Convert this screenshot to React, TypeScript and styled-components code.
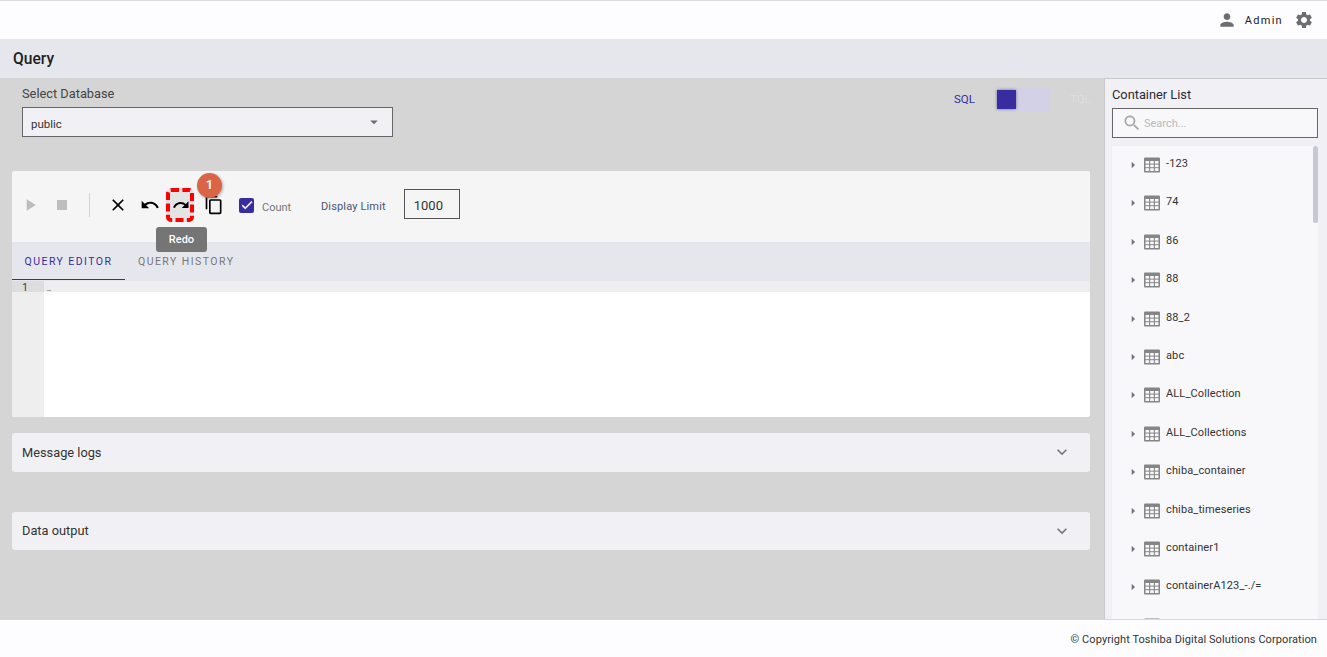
import React from "react";
import styled, { createGlobalStyle } from "styled-components";

const GlobalStyle = createGlobalStyle`
  html, body, #root {
    margin: 0;
    padding: 0;
    height: 100%;
  }
  body {
    font-family: Roboto, "Liberation Sans", sans-serif;
    overflow: hidden;
  }
`;

const paths = {
  play: "M8 5v14l11-7z",
  stop: "M6 6h12v12H6z",
  close:
    "M19 6.41L17.59 5 12 10.59 6.41 5 5 6.41 10.59 12 5 17.59 6.41 19 12 13.41 17.59 19 19 17.59 13.41 12z",
  undo: "M12.5 8c-2.65 0-5.05.99-6.9 2.6L2 7v9h9l-3.62-3.62c1.39-1.16 3.16-1.88 5.12-1.88 3.54 0 6.55 2.31 7.6 5.5l2.37-.78C21.08 11.03 17.15 8 12.5 8z",
  redo: "M18.4 10.6C16.55 8.99 14.15 8 11.5 8c-4.65 0-8.58 3.03-9.96 7.22L3.9 16c1.05-3.19 4.05-5.5 7.6-5.5 1.95 0 3.73.72 5.12 1.88L13 16h9V7l-3.6 3.6z",
  copy: "M16 1H4c-1.1 0-2 .9-2 2v14h2V3h12V1zm3 4H8c-1.1 0-2 .9-2 2v14c0 1.1.9 2 2 2h11c1.1 0 2-.9 2-2V7c0-1.1-.9-2-2-2zm0 16H8V7h11v14z",
  person:
    "M12 12c2.21 0 4-1.79 4-4s-1.79-4-4-4-4 1.79-4 4 1.79 4 4 4zm0 2c-2.67 0-8 1.34-8 4v2h16v-2c0-2.66-5.33-4-8-4z",
  settings:
    "M19.14 12.94c.04-.3.06-.61.06-.94 0-.32-.02-.64-.07-.94l2.03-1.58c.18-.14.23-.41.12-.61l-1.92-3.32c-.12-.22-.37-.29-.59-.22l-2.39.96c-.5-.38-1.03-.7-1.62-.94l-.36-2.54c-.04-.24-.24-.41-.48-.41h-3.84c-.24 0-.43.17-.47.41l-.36 2.54c-.59.24-1.13.57-1.62.94l-2.39-.96c-.22-.08-.47 0-.59.22L2.74 8.87c-.12.21-.08.47.12.61l2.03 1.58c-.05.3-.09.63-.09.94s.02.64.07.94l-2.03 1.58c-.18.14-.23.41-.12.61l1.92 3.32c.12.22.37.29.59.22l2.39-.96c.5.38 1.03.7 1.62.94l.36 2.54c.05.24.24.41.48.41h3.84c.24 0 .44-.17.47-.41l.36-2.54c.59-.24 1.13-.56 1.62-.94l2.39.96c.22.08.47 0 .59-.22l1.92-3.32c.12-.22.07-.47-.12-.61l-2.01-1.58zM12 15.6c-1.98 0-3.6-1.62-3.6-3.6s1.62-3.6 3.6-3.6 3.6 1.62 3.6 3.6-1.62 3.6-3.6 3.6z",
  search:
    "M15.5 14h-.79l-.28-.27C15.41 12.59 16 11.11 16 9.5 16 5.91 13.09 3 9.5 3S3 5.91 3 9.5 5.91 16 9.5 16c1.61 0 3.09-.59 4.23-1.57l.27.28v.79l5 4.99L20.49 19l-4.99-5zm-6 0C7.01 14 5 11.99 5 9.5S7.01 5 9.5 5 14 7.01 14 9.5 11.99 14 9.5 14z",
  expand: "M16.59 8.59L12 13.17 7.41 8.59 6 10l6 6 6-6z",
  caret: "M10 17l5-5-5-5v10z",
  drop: "M7 10l5 5 5-5z",
  check: "M9 16.2L4.8 12l-1.4 1.4L9 19 21 7l-1.4-1.4z",
};

type IconProps = {
  name: keyof typeof paths;
  size?: number;
  color?: string;
};
const Icon: React.FC<IconProps> = ({ name, size = 24, color = "#000" }) => (
  <svg width={size} height={size} viewBox="0 0 24 24" fill={color}>
    <path d={paths[name]} />
  </svg>
);

const Page = styled.div`
  width: 1327px;
  height: 657px;
  display: flex;
  flex-direction: column;
  overflow: hidden;
`;

const Header = styled.header`
  height: 38px;
  flex: none;
  border-top: 1px solid #dcdcdc;
  background: #fdfdff;
  display: flex;
  align-items: center;
  justify-content: flex-end;
  padding-right: 13px;
`;

const AdminName = styled.span`
  font-size: 11px;
  letter-spacing: 1.3px;
  color: #1b1b2b;
  margin: 0 11px 0 8px;
`;

const TitleBar = styled.div`
  height: 39px;
  flex: none;
  background: #e6e7ec;
  display: flex;
  align-items: center;
  padding-left: 13px;
  font-size: 15.6px;
  font-weight: 500;
  color: #1e1e22;
`;

const Body = styled.div`
  flex: 1;
  min-height: 0;
  display: flex;
  background: #d5d5d5;
`;

const Main = styled.main`
  flex: 1;
  min-width: 0;
  padding: 0 14px 0 12px;
  position: relative;
`;

const TopRow = styled.div`
  display: flex;
  justify-content: space-between;
  height: 93px;
  padding-left: 10px;
`;

const DbLabel = styled.div`
  font-size: 12.8px;
  line-height: 15px;
  color: #444;
  margin: 8px 0 6px;
`;

const DbSelect = styled.div`
  width: 371px;
  height: 30px;
  box-sizing: border-box;
  border: 1px solid #666;
  background: #f1f1f5;
  display: flex;
  align-items: center;
  justify-content: space-between;
  padding: 0 9px 0 8px;
  font-size: 11.5px;
  color: #333;
`;

const DbValue = styled.span`
  margin-top: 4px;
`;

const ModeSwitch = styled.div`
  display: flex;
  align-items: center;
  height: 24px;
  margin-top: 9px;
`;

const ModeLabel = styled.span<{ $active?: boolean }>`
  font-size: 11.5px;
  width: 20px;
  color: ${(p) => (p.$active ? "#372ca0" : "#dedede")};
`;

const SwitchTrack = styled.div`
  width: 55px;
  height: 24px;
  margin: 0 20px 0 21px;
  background: #d2d1e6;
  display: flex;
  align-items: center;
  padding-left: 2px;
  box-sizing: border-box;
`;

const SwitchThumb = styled.div`
  width: 19px;
  height: 19px;
  background: #372ca0;
  box-shadow: 0 0 3px rgba(0, 0, 0, 0.45);
`;

const EditorCard = styled.section`
  height: 246px;
  border-radius: 3px;
  display: flex;
  flex-direction: column;
  background: #fff;
`;

const Toolbar = styled.div`
  height: 71px;
  flex: none;
  border-radius: 3px 3px 0 0;
  background: #f5f5f5;
  display: flex;
  align-items: center;
  padding: 0 0 4px 2px;
  box-sizing: border-box;
`;

const ToolButton = styled.div<{ $width?: number }>`
  width: ${(p) => p.$width ?? 32}px;
  height: 34px;
  display: flex;
  align-items: center;
  justify-content: center;
  flex: none;
`;

const RedoButton = styled(ToolButton)`
  position: relative;
  width: 28px;
  margin: 0 3px 0 0;
  padding-left: 2px;
  box-sizing: border-box;
  background: #e4e4e4;
  border: 4px dashed #f00;
  border-radius: 5px;
  svg {
    flex: none;
  }
`;

const Badge = styled.div`
  position: absolute;
  left: 27px;
  top: -19px;
  width: 25px;
  height: 25px;
  border-radius: 50%;
  background: #da6445;
  color: #fff;
  font-size: 12px;
  font-weight: 700;
  display: flex;
  align-items: center;
  justify-content: center;
  box-shadow: 1px 1px 3px rgba(0, 0, 0, 0.3);
  z-index: 2;
`;

const Tooltip = styled.div`
  position: absolute;
  left: -14px;
  top: 35px;
  width: 51px;
  height: 25px;
  border-radius: 3px;
  background: #757575;
  color: #fff;
  font-size: 11px;
  font-weight: 500;
  display: flex;
  align-items: center;
  justify-content: center;
  z-index: 2;
`;

const Divider = styled.div`
  width: 1px;
  height: 24px;
  background: #d4d4d4;
  margin: 0 12px 0 11px;
`;

const CheckBox = styled.div`
  width: 15px;
  height: 15px;
  margin: 1px 8px 0 9px;
  border-radius: 2px;
  background: #372ca0;
  display: flex;
  align-items: center;
  justify-content: center;
  path {
    stroke: #fff;
    stroke-width: 1;
  }
`;

const CountLabel = styled.span`
  font-size: 11px;
  color: #777;
  margin-top: 5px;
  width: 59px;
`;

const LimitLabel = styled.span`
  font-size: 11px;
  letter-spacing: 0.15px;
  color: #4a5670;
  margin: 3px 18px 0 0;
`;

const LimitInput = styled.div`
  width: 56px;
  height: 30px;
  margin-bottom: 2px;
  box-sizing: border-box;
  border: 1px solid #555;
  display: flex;
  align-items: center;
  padding: 3px 0 0 9px;
  font-size: 13px;
  color: #333;
`;

const Tabs = styled.div`
  height: 39px;
  flex: none;
  background: #e6e7ec;
  display: flex;
  align-items: flex-start;
`;

const Tab = styled.div<{ $active?: boolean }>`
  width: ${(p) => (p.$active ? 113 : 122)}px;
  height: 38px;
  box-sizing: border-box;
  text-align: ${(p) => (p.$active ? "center" : "left")};
  padding-left: ${(p) => (p.$active ? 0 : 13)}px;
  line-height: 39px;
  font-size: 10.5px;
  letter-spacing: 1.45px;
  color: ${(p) => (p.$active ? "#372ca0" : "#777")};
  border-bottom: 1px solid ${(p) => (p.$active ? "#372ca0" : "transparent")};
`;

const Editor = styled.div`
  flex: 1;
  display: flex;
  background: #fff;
  border-radius: 0 0 3px 3px;
  overflow: hidden;
`;

const Gutter = styled.div`
  width: 32px;
  flex: none;
  background: #eeeeee;
`;

const GutterNumber = styled.div`
  height: 11px;
  background: #dddddd;
  font-size: 10px;
  line-height: 13px;
  text-align: center;
  padding-right: 6px;
  color: #333;
  box-sizing: border-box;
  overflow: hidden;
`;

const EditorLines = styled.div`
  flex: 1;
`;

const ActiveLine = styled.div`
  height: 11px;
  background: #eeeeee;
  font-size: 9px;
  line-height: 12px;
  padding-left: 3px;
  color: #888;
  overflow: hidden;
`;

const Accordion = styled.div<{ $height: number; $top: number }>`
  height: ${(p) => p.$height}px;
  margin-top: ${(p) => p.$top}px;
  background: #f1f1f5;
  border-radius: 3px;
  display: flex;
  align-items: center;
  justify-content: space-between;
  padding: 0 18px 1px 10px;
  box-sizing: border-box;
  font-size: 12.8px;
  color: #333;
`;

const Sidebar = styled.aside`
  width: 223px;
  flex: none;
  box-sizing: border-box;
  background: #f1f1f5;
  border-left: 1px solid #c9c9c9;
  border-top: 1px solid #c9c9c9;
  padding: 0 9px 0 7px;
  display: flex;
  flex-direction: column;
  overflow: hidden;
`;

const SidebarTitle = styled.div`
  font-size: 12.8px;
  line-height: 15px;
  color: #2a2a35;
  margin: 8px 0 6px;
`;

const SearchBox = styled.div`
  height: 30px;
  flex: none;
  box-sizing: border-box;
  border: 1px solid #666;
  background: #f8f8fb;
  display: flex;
  align-items: center;
  gap: 2px;
  padding-left: 9px;
  font-size: 11px;
  color: #b9b9b9;
`;

const TreeBox = styled.div`
  flex: 1;
  min-height: 0;
  margin-top: 8px;
  background: #f8f8fb;
  position: relative;
  overflow: hidden;
  padding-top: 10px;
`;

const ScrollThumb = styled.div`
  position: absolute;
  top: 0;
  right: 0;
  width: 5px;
  height: 77px;
  border-radius: 3px;
  background: #c6c8d4;
`;

const TreeRow = styled.div`
  height: 38.4px;
  display: flex;
  align-items: flex-start;
  padding-left: 13px;
  font-size: 11px;
  letter-spacing: 0.13px;
  color: #333;
`;

const RowName = styled.span`
  margin: 1px 0 0 5px;
  line-height: 13px;
`;

const CaretWrap = styled.span`
  display: flex;
  margin: 1px 2px 0 0;
`;

const Footer = styled.footer`
  height: 38px;
  flex: none;
  background: #fdfdff;
  border-top: 1px solid #d8d8d8;
  box-sizing: border-box;
  display: flex;
  align-items: center;
  justify-content: flex-end;
  padding: 1px 10px 0 0;
  font-size: 11px;
  letter-spacing: 0.08px;
  color: #333;
`;

const TableSvg = styled.svg`
  flex: none;
`;

const TableIcon: React.FC = () => (
  <TableSvg width="18" height="18" viewBox="0 0 18 18">
    <rect x="1" y="1.5" width="16" height="15" rx="1" fill="#858585" />
    <g fill="#f8f8fb">
      <rect x="2.5" y="5" width="3.6" height="2.6" />
      <rect x="7.2" y="5" width="3.6" height="2.6" />
      <rect x="11.9" y="5" width="3.6" height="2.6" />
      <rect x="2.5" y="8.6" width="3.6" height="2.6" />
      <rect x="7.2" y="8.6" width="3.6" height="2.6" />
      <rect x="11.9" y="8.6" width="3.6" height="2.6" />
      <rect x="2.5" y="12.2" width="3.6" height="2.8" />
      <rect x="7.2" y="12.2" width="3.6" height="2.8" />
      <rect x="11.9" y="12.2" width="3.6" height="2.8" />
    </g>
  </TableSvg>
);

const containers = [
  "-123",
  "74",
  "86",
  "88",
  "88_2",
  "abc",
  "ALL_Collection",
  "ALL_Collections",
  "chiba_container",
  "chiba_timeseries",
  "container1",
  "containerA123_-./=",
  "",
];

const App: React.FC = () => (
  <Page>
    <GlobalStyle />
    <Header>
      <Icon name="person" size={20} color="#6e6e6e" />
      <AdminName>Admin</AdminName>
      <Icon name="settings" size={20} color="#6e6e6e" />
    </Header>
    <TitleBar>Query</TitleBar>
    <Body>
      <Main>
        <TopRow>
          <div>
            <DbLabel>Select Database</DbLabel>
            <DbSelect>
              <DbValue>public</DbValue>
              <Icon name="drop" size={18} color="#6e6e6e" />
            </DbSelect>
          </div>
          <ModeSwitch>
            <ModeLabel $active>SQL</ModeLabel>
            <SwitchTrack>
              <SwitchThumb />
            </SwitchTrack>
            <ModeLabel>TQL</ModeLabel>
          </ModeSwitch>
        </TopRow>
        <EditorCard>
          <Toolbar>
            <ToolButton>
              <Icon name="play" size={20} color="#bdbdbd" />
            </ToolButton>
            <ToolButton>
              <Icon name="stop" size={20} color="#bdbdbd" />
            </ToolButton>
            <Divider />
            <ToolButton>
              <Icon name="close" size={20} />
            </ToolButton>
            <ToolButton>
              <Icon name="undo" size={20} />
            </ToolButton>
            <RedoButton>
              <Icon name="redo" size={18} />
              <Badge>1</Badge>
              <Tooltip>Redo</Tooltip>
            </RedoButton>
            <ToolButton $width={33}>
              <Icon name="copy" size={20} />
            </ToolButton>
            <CheckBox>
              <Icon name="check" size={14} color="#fff" />
            </CheckBox>
            <CountLabel>Count</CountLabel>
            <LimitLabel>Display Limit</LimitLabel>
            <LimitInput>1000</LimitInput>
          </Toolbar>
          <Tabs>
            <Tab $active>QUERY EDITOR</Tab>
            <Tab>QUERY HISTORY</Tab>
          </Tabs>
          <Editor>
            <Gutter>
              <GutterNumber>1</GutterNumber>
            </Gutter>
            <EditorLines>
              <ActiveLine>_</ActiveLine>
            </EditorLines>
          </Editor>
        </EditorCard>
        <Accordion $height={39} $top={16}>
          Message logs
          <Icon name="expand" size={20} color="#777" />
        </Accordion>
        <Accordion $height={38} $top={40}>
          Data output
          <Icon name="expand" size={20} color="#777" />
        </Accordion>
      </Main>
      <Sidebar>
        <SidebarTitle>Container List</SidebarTitle>
        <SearchBox>
          <Icon name="search" size={20} color="#a8a8a8" />
          Search...
        </SearchBox>
        <TreeBox>
          <ScrollThumb />
          {containers.map((name, i) => (
            <TreeRow key={i}>
              <CaretWrap>
                <Icon name="caret" size={16} color="#6e7480" />
              </CaretWrap>
              <TableIcon />
              <RowName>{name}</RowName>
            </TreeRow>
          ))}
        </TreeBox>
      </Sidebar>
    </Body>
    <Footer>© Copyright Toshiba Digital Solutions Corporation</Footer>
  </Page>
);

export default App;
